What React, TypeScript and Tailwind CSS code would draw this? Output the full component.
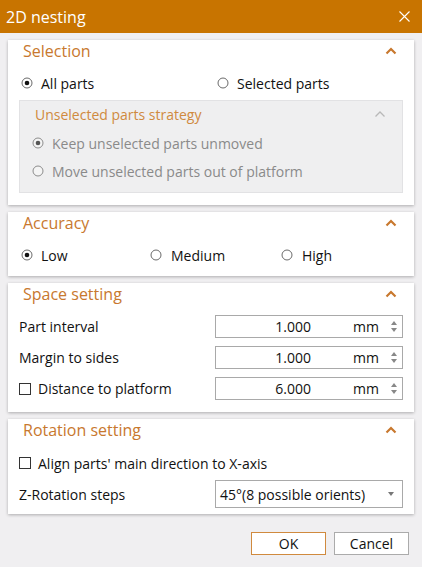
import React from 'react';

const font = { fontFamily: '"Open Sans", "Noto Sans", sans-serif' };

const Chevron = ({ muted = false }: { muted?: boolean }) => (
    <svg width="12" height="8" viewBox="0 0 12 8" className="shrink-0">
        <polyline
            points="1.5,6.5 6,2 10.5,6.5"
            fill="none"
            stroke={muted ? '#b8b8b8' : '#c8782e'}
            strokeWidth={muted ? 1.3 : 2.2}
        />
    </svg>
);

const Radio = ({ checked = false, disabled = false }: { checked?: boolean; disabled?: boolean }) => (
    <svg width="12" height="12" viewBox="0 0 12 12" className="shrink-0">
        <circle cx="6" cy="6" r="5" fill={disabled ? '#f4f4f4' : '#fff'} stroke={disabled ? '#8c8c8c' : '#6a6a6a'} strokeWidth="1" />
        {checked && <circle cx="6" cy="6" r="2.3" fill={disabled ? '#555' : '#111'} />}
    </svg>
);

const Checkbox = () => (
    <span className="w-[12px] h-[12px] border border-[#333] bg-white shrink-0" />
);

const Card = ({ title, children, className = '' }: { title: string; children: React.ReactNode; className?: string }) => (
    <div className={`bg-white shadow-[0_1px_3px_rgba(0,0,0,0.28)] px-[11px] ${className}`}>
        <div className="h-[22px] flex items-center justify-between pl-[4px] pr-[6px]">
            <span className="text-[16px] text-[#c8782e]">{title}</span>
            <Chevron />
        </div>
        {children}
    </div>
);

const NumberField = ({ value }: { value: string }) => (
    <div className="w-[188px] h-[23px] border border-[#a9a9a9] bg-white flex items-center text-[14px] text-[#111]">
        <span className="w-[95px] text-right">{value}</span>
        <span className="flex-1 text-right pr-[9px]">mm</span>
        <div className="w-[12px] mr-[2px] flex flex-col items-center gap-[3px]">
            <svg width="6" height="4" viewBox="0 0 6 4"><polygon points="0,4 3,0 6,4" fill="#888" /></svg>
            <svg width="6" height="4" viewBox="0 0 6 4"><polygon points="0,0 6,0 3,4" fill="#888" /></svg>
        </div>
    </div>
);

export default function App() {
    return (
        <div className="w-[422px] h-[567px] bg-[#f0eff1] flex flex-col" style={font}>
            {/* title bar */}
            <div className="h-[33px] bg-[#c87400] flex items-center justify-between pl-[6px] pr-[12px] shrink-0">
                <span className="text-white text-[16px]">2D nesting</span>
                <svg width="11" height="11" viewBox="0 0 11 11">
                    <path d="M0.5 0.5 L10.5 10.5 M10.5 0.5 L0.5 10.5" stroke="#fff" strokeWidth="1.1" />
                </svg>
            </div>

            <div className="flex flex-col gap-[7px] pl-[8px] pr-[8px] pt-[7px]">
                {/* Selection */}
                <Card title="Selection" className="pb-[12px]">
                    <div className="h-[38px] pt-[4px] flex items-center text-[14px] text-[#111] pl-[2px]">
                        <div className="w-[196px] flex items-center gap-[8px]">
                            <Radio checked />
                            <span>All parts</span>
                        </div>
                        <div className="flex items-center gap-[8px]">
                            <Radio />
                            <span>Selected parts</span>
                        </div>
                    </div>
                    <div className="bg-[#efeff0] border border-[#e2e2e4] pb-[7px]">
                        <div className="h-[26px] flex items-center justify-between pl-[15px] pr-[16px]">
                            <span className="text-[14px] text-[#cf8a3e]">Unselected parts strategy</span>
                            <Chevron muted />
                        </div>
                        <div className="h-[28px] mt-[2px] flex items-center gap-[8px] pl-[12px] text-[14px] text-[#8a8a8a]">
                            <Radio checked disabled />
                            <span>Keep unselected parts unmoved</span>
                        </div>
                        <div className="h-[28px] flex items-center gap-[8px] pl-[12px] text-[14px] text-[#8a8a8a]">
                            <Radio disabled />
                            <span>Move unselected parts out of platform</span>
                        </div>
                    </div>
                </Card>

                {/* Accuracy */}
                <Card title="Accuracy">
                    <div className="h-[42px] flex items-center text-[14px] text-[#111] pl-[2px]">
                        <div className="w-[129px] flex items-center gap-[8px]">
                            <Radio checked />
                            <span>Low</span>
                        </div>
                        <div className="w-[131px] flex items-center gap-[9px]">
                            <Radio />
                            <span>Medium</span>
                        </div>
                        <div className="flex items-center gap-[9px]">
                            <Radio />
                            <span>High</span>
                        </div>
                    </div>
                </Card>

                {/* Space setting */}
                <Card title="Space setting" className="pb-[12px]">
                    <div className="flex flex-col gap-[8px] mt-[10px] text-[14px] text-[#111]">
                        <div className="flex items-center justify-between">
                            <span>Part interval</span>
                            <NumberField value="1.000" />
                        </div>
                        <div className="flex items-center justify-between">
                            <span>Margin to sides</span>
                            <NumberField value="1.000" />
                        </div>
                        <div className="flex items-center justify-between">
                            <div className="flex items-center gap-[7px]">
                                <Checkbox />
                                <span>Distance to platform</span>
                            </div>
                            <NumberField value="6.000" />
                        </div>
                    </div>
                </Card>

                {/* Rotation setting */}
                <Card title="Rotation setting" className="pb-[6px]">
                    <div className="h-[24px] mt-[10px] flex items-center gap-[7px] text-[14px] text-[#111]">
                        <Checkbox />
                        <span>Align parts' main direction to X-axis</span>
                    </div>
                    <div className="mt-[5px] flex items-center justify-between text-[14px] text-[#111]">
                        <span>Z-Rotation steps</span>
                        <div className="w-[188px] h-[28px] border border-[#a9a9a9] bg-white flex items-center justify-between pl-[4px] pr-[8px]">
                            <span>45°(8 possible orients)</span>
                            <svg width="6" height="4" viewBox="0 0 6 4"><polygon points="0,0 6,0 3,4" fill="#777" /></svg>
                        </div>
                    </div>
                </Card>
            </div>

            {/* footer buttons */}
            <div className="flex justify-end gap-[8px] pr-[13px] mt-[18px] text-[14px] text-[#111]">
                <button className="w-[75px] h-[23px] border border-[#d08a3e] bg-white">OK</button>
                <button className="w-[75px] h-[23px] border border-[#ababab] bg-white">Cancel</button>
            </div>
        </div>
    );
}
